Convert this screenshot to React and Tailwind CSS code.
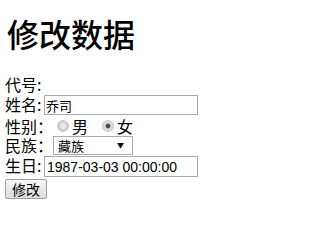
import { useState } from "react";

const cjk = "font-['Noto_Sans_CJK_SC',sans-serif]";

const App = () => {
  const [name, setName] = useState("乔司");
  const [sex, setSex] = useState("女");
  const [nation, setNation] = useState("藏族");
  const [birthday, setBirthday] = useState("1987-03-03 00:00:00");

  return (
    <div className={`min-h-screen bg-white text-black px-[5px] ${cjk}`}>
      <h1 className="pt-[15px] text-[32px] leading-[36px] font-medium pl-[2px]">修改数据</h1>

      <form className="mt-[22px] text-[16px] leading-[16px]" onSubmit={(e) => e.preventDefault()}>
        {/* 代号 */}
        <div className="h-[21px] flex items-center">
          <span>代号</span>
          <span className="w-[8px]">:</span>
        </div>

        {/* 姓名 */}
        <div className="h-[22px] flex items-center">
          <span className="-mt-[2px]">姓名</span>
          <span className="w-[7px] -mt-[2px]">:</span>
          <input
            className="w-[154px] h-[20px] border border-[#a9a9a9] px-[1px] text-[13px] outline-none"
            value={name}
            onChange={(e) => setName(e.target.value)}
          />
        </div>

        {/* 性别 */}
        <div className="h-[19px] flex items-center">
          <span>性别</span>
          <span className="w-[16px]">：</span>
          {["男", "女"].map((s) => (
            <label key={s} className="flex items-center">
              <input
                type="radio"
                name="sex"
                checked={sex === s}
                onChange={() => setSex(s)}
                className={`appearance-none w-[12px] h-[12px] rounded-full border border-[#c4c4c4] ml-[4px] mr-[3px] mt-[1px] ${
                  sex === s
                    ? "bg-[radial-gradient(circle,#4a4a4a_0_28%,#d8d8d8_40%,#e6e6e6_100%)]"
                    : "bg-[radial-gradient(circle,#e9e9e9_0_38%,#cdcdcd_50%,#e2e2e2_100%)]"
                }`}
              />
              <span className="mr-[10px]">{s}</span>
            </label>
          ))}
        </div>

        {/* 民族 */}
        <div className="h-[20px] flex items-center">
          <span>民族</span>
          <span className="w-[16px]">：</span>
          <div className="relative">
            <select
              className="appearance-none w-[80px] h-[19px] border border-[#a9a9a9] bg-white pl-[4px] text-[13px] leading-[17px] outline-none"
              value={nation}
              onChange={(e) => setNation(e.target.value)}
            >
              <option>汉族</option>
              <option>藏族</option>
              <option>回族</option>
              <option>满族</option>
            </select>
            <span className="absolute right-[9px] top-[5px] text-[7px] leading-[8px] pointer-events-none">▼</span>
          </div>
        </div>

        {/* 生日 */}
        <div className="h-[23px] flex items-center">
          <span className="-mt-[3px]">生日</span>
          <span className="w-[7px] -mt-[3px]">:</span>
          <input
            className="w-[154px] h-[21px] border border-[#a9a9a9] px-[2px] text-[14px] font-['Liberation_Sans_Narrow','Liberation_Sans',sans-serif] outline-none"
            value={birthday}
            onChange={(e) => setBirthday(e.target.value)}
          />
        </div>

        <button
          type="submit"
          className="mt-[1px] w-[42px] h-[20px] border border-[#a0a0a0] rounded-[2px] bg-[linear-gradient(#f6f6f6,#dcdcdc)] text-[14px] leading-[18px]"
        >
          修改
        </button>
      </form>
    </div>
  );
};

export default App;
